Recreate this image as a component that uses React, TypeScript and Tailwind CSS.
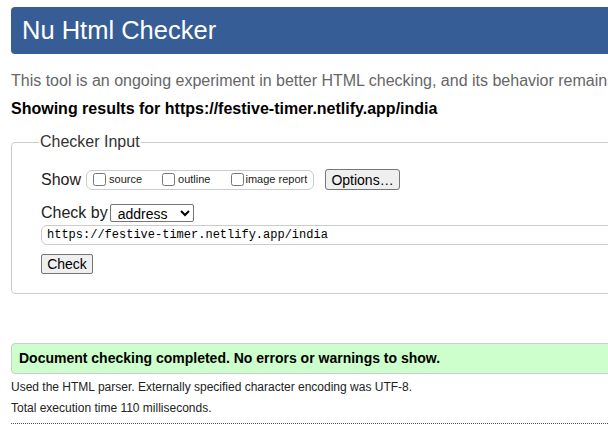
import React from 'react';

const App = () => {
  return (
    <div className="w-[608px] h-[436px] overflow-hidden bg-white font-['Liberation_Sans',Arial,sans-serif] text-[#222]">
      <div className="w-[720px] pl-[11px] pt-[7px]">
        {/* Header */}
        <div className="bg-[#365d95] rounded-[4px] h-[47px] flex items-center pl-[11px]">
          <h1 className="text-white text-[25.5px] leading-none">Nu Html Checker</h1>
        </div>

        <p className="mt-[17px] text-[16px] text-[#666] leading-[20px] whitespace-nowrap">
          This tool is an ongoing experiment in better HTML checking, and its behavior remains subject to change
        </p>
        <p className="mt-[8px] text-[16px] font-bold text-black leading-[20px] whitespace-nowrap">
          Showing results for https://festive-timer.netlify.app/india
        </p>

        {/* Checker input */}
        <fieldset className="mt-[15px] border border-[#ccc] rounded-[4px] pl-[29px] pr-0 pb-[19px]">
          <legend className="text-[16px] leading-[16px] text-[#333] px-[1px] -ml-[2px]">Checker Input</legend>
          <div className="flex items-center mt-[19px] h-[21px]">
            <span className="text-[16px] mr-[5px]">Show</span>
            <div className="flex items-center h-[20px] w-[228px] border border-[#ccc] rounded-[6px] pl-[6px]">
              <label className="flex items-center text-[11px] mr-[20px]">
                <input type="checkbox" className="m-0 w-[13px] h-[13px] mr-[3px]" />
                source
              </label>
              <label className="flex items-center text-[11px] mr-[21px]">
                <input type="checkbox" className="m-0 w-[13px] h-[13px] mr-[3px]" />
                outline
              </label>
              <label className="flex items-center text-[11px]">
                <input type="checkbox" className="m-0 w-[13px] h-[13px] mr-[1px]" />
                image report
              </label>
            </div>
            <button className="ml-[11px] h-[21px] w-[75px] bg-[#efefef] border border-[#767676] rounded-[3px] text-[14px] leading-none text-black">
              Options…
            </button>
          </div>
          <div className="flex items-center mt-[14px] h-[18px]">
            <span className="text-[16px] mr-[2px]">Check by</span>
            <select className="h-[18px] w-[84px] border border-[#767676] rounded-[2px] bg-white text-[14px] leading-none text-black pl-[3px]">
              <option>address</option>
            </select>
          </div>
          <input
            type="text"
            defaultValue="https://festive-timer.netlify.app/india"
            className="block mt-[3px] w-full h-[20px] border border-[#ccc] rounded-l-[6px] pl-[5px] font-['Liberation_Mono',monospace] text-[12px] text-black"
          />
          <button className="block mt-[9px] h-[20px] w-[52px] bg-[#efefef] border border-[#767676] rounded-[2px] text-[14px] leading-none text-black">
            Check
          </button>
        </fieldset>

        {/* Result */}
        <div className="mt-[49px] h-[31px] bg-[#ccffcc] border border-[#ccc] rounded-l-[4px] flex items-center pl-[7px]">
          <span className="text-[14px] font-bold text-black">Document checking completed. No errors or warnings to show.</span>
        </div>
        <p className="mt-[6px] text-[12px] leading-[15px] text-[#222]">
          Used the HTML parser. Externally specified character encoding was UTF-8.
        </p>
        <p className="mt-[6px] text-[12px] leading-[15px] text-[#222]">Total execution time 110 milliseconds.</p>
        <div className="mt-[7px] border-t border-dotted border-[#555]" />
      </div>
    </div>
  );
};

export default App;
